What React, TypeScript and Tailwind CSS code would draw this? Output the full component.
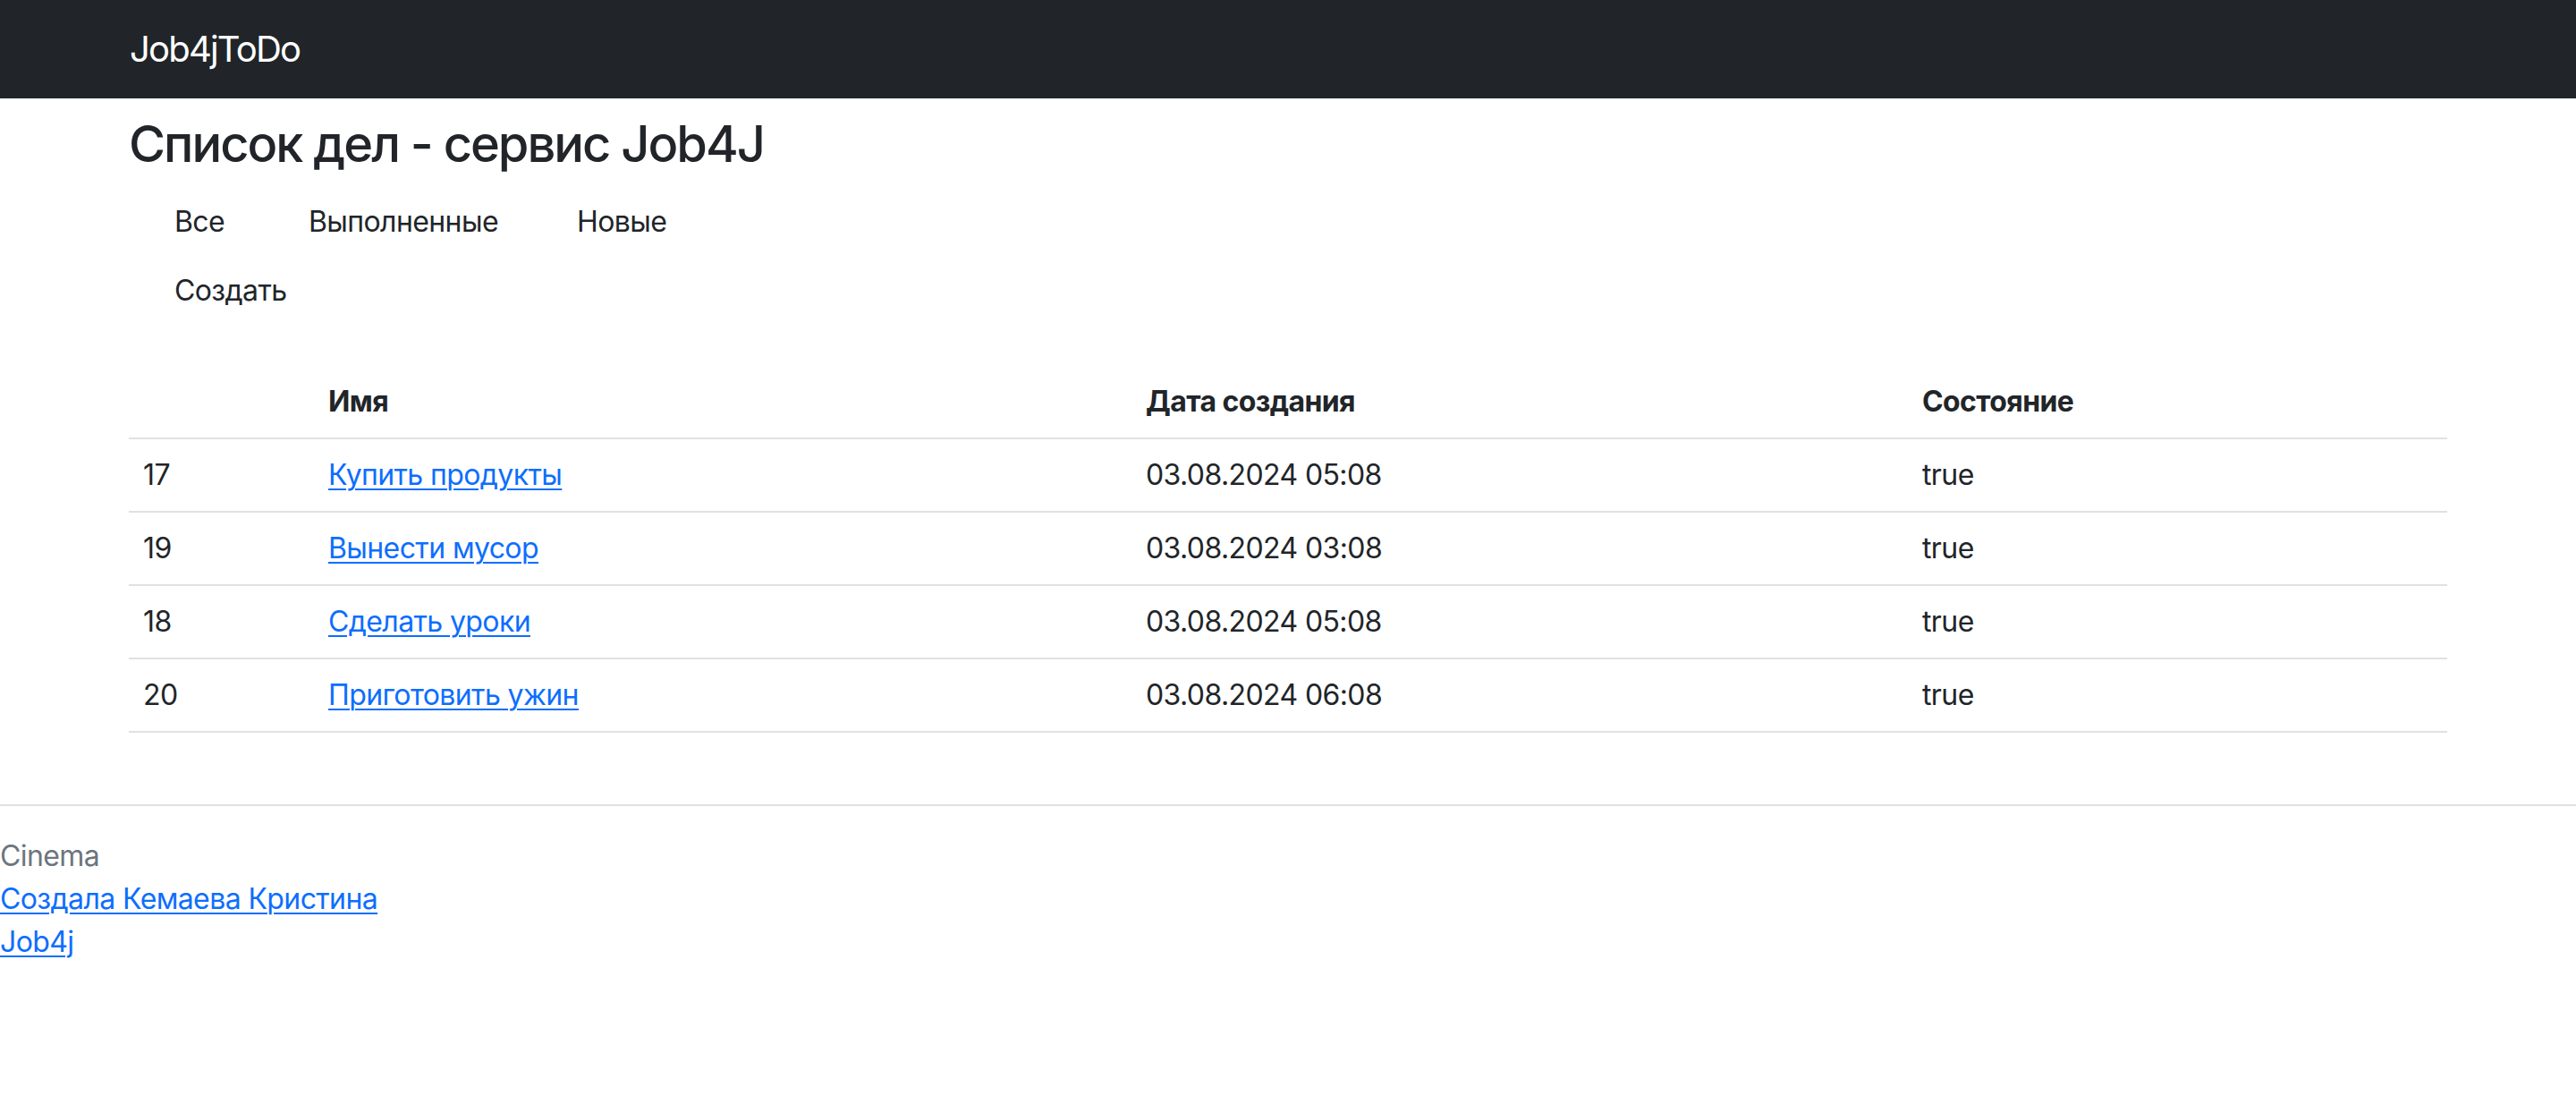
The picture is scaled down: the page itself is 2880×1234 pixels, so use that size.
import React from "react";

const rows = [
  { id: 17, name: "Купить продукты", date: "03.08.2024 05:08", done: "true" },
  { id: 19, name: "Вынести мусор", date: "03.08.2024 03:08", done: "true" },
  { id: 18, name: "Сделать уроки", date: "03.08.2024 05:08", done: "true" },
  { id: 20, name: "Приготовить ужин", date: "03.08.2024 06:08", done: "true" },
];

export default function App() {
  return (
    <div className="min-h-[1234px] bg-white text-[#212529] font-['Inter','Noto_Sans',sans-serif] text-[32px] leading-[48px] tracking-[-0.6px]">
      <header className="h-[110px] bg-[#212529] flex items-center px-[145px]">
        <a href="#" className="text-white text-[40px] leading-[60px] tracking-[-1.8px]">Job4jToDo</a>
      </header>

      <main className="px-[144px]">
        <h3 className="mt-[18px] text-[56px] leading-[67px] font-medium tracking-[-2px]">Список дел - сервис Job4J</h3>

        <nav className="mt-[29px] pl-[51px]">
          <div className="flex h-[48px]">
            <a href="#" className="w-[150px]">Все</a>
            <a href="#" className="w-[300px]">Выполненные</a>
            <a href="#">Новые</a>
          </div>
          <div className="flex h-[48px] mt-[29px]">
            <a href="#">Создать</a>
          </div>
        </nav>

        <table className="mt-[60px] w-full table-fixed border-collapse">
          <thead>
            <tr className="border-b-2 border-[#dee2e6]">
              <th className="w-[207px] px-[16px] py-[16px] text-left font-bold"></th>
              <th className="w-[914px] px-[16px] py-[16px] text-left font-bold">Имя</th>
              <th className="w-[868px] px-[16px] py-[16px] text-left font-bold">Дата создания</th>
              <th className="px-[16px] py-[16px] text-left font-bold">Состояние</th>
            </tr>
          </thead>
          <tbody>
            {rows.map((r) => (
              <tr key={r.id} className="border-b-2 border-[#dee2e6]">
                <td className="px-[16px] py-[16px]">{r.id}</td>
                <td className="px-[16px] py-[16px]">
                  <a href="#" className="text-[#0d6efd] underline decoration-[2px] underline-offset-[4px]">{r.name}</a>
                </td>
                <td className="px-[16px] py-[16px]">{r.date}</td>
                <td className="px-[16px] py-[16px]">{r.done}</td>
              </tr>
            ))}
          </tbody>
        </table>
      </main>

      <footer className="mt-[80px] border-t-2 border-[#dee2e6] pt-[32px] pb-[32px]">
        <div className="text-[#6c757d]">Cinema</div>
        <div>
          <a href="#" className="text-[#0d6efd] underline decoration-[2px] underline-offset-[4px]">Создала Кемаева Кристина</a>
        </div>
        <div>
          <a href="#" className="text-[#0d6efd] underline decoration-[2px] underline-offset-[4px]">Job4j</a>
        </div>
      </footer>
    </div>
  );
}
